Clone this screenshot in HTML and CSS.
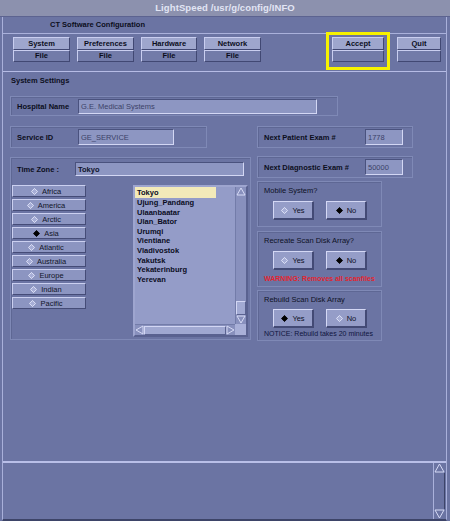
FILE: index.html
```html
<!DOCTYPE html>
<html>
<head>
<meta charset="utf-8">
<link rel="stylesheet" href="styles.css">
</head>
<body>
<div class="win">
  <div class="titlebar">LightSpeed /usr/g/config/INFO</div>
  <div class="app">
    <div class="apptitle">CT Software Configuration</div>
    <div class="toolbar">
      <div class="tbgroup">
        <div class="tbtn"><span class="tb-top">System</span><span class="tb-bot">File</span></div>
        <div class="tbtn"><span class="tb-top">Preferences</span><span class="tb-bot">File</span></div>
        <div class="tbtn tb-narrow"><span class="tb-top">Hardware</span><span class="tb-bot">File</span></div>
        <div class="tbtn"><span class="tb-top">Network</span><span class="tb-bot">File</span></div>
      </div>
      <div class="tbtn accept"><span class="tb-top">Accept</span><span class="tb-bot"></span><span class="highlight"></span></div>
      <div class="tbtn quit"><span class="tb-top">Quit</span><span class="tb-bot"></span></div>
    </div>
    <div class="settings">
      <div class="settings-label">System Settings</div>
      <div class="rows">
        <div class="box hospital">
          <span class="lbl lbl-hosp">Hospital Name</span>
          <span class="input in-hosp">G.E. Medical Systems</span>
        </div>
        <div class="row2">
          <div class="box service">
            <span class="lbl lbl-hosp">Service ID</span>
            <span class="input in-svc">GE_SERVICE</span>
          </div>
          <div class="box exam">
            <span class="lbl lbl-exam">Next Patient Exam #</span>
            <span class="input in-exam">1778</span>
          </div>
        </div>
        <div class="row3">
          <div class="box tz">
            <div class="tz-head">
              <span class="lbl lbl-tz">Time Zone :</span>
              <span class="input in-tz">Tokyo</span>
            </div>
            <div class="tz-body">
              <div class="regions">
                <div class="rbtn"><svg class="dia" viewBox="0 0 8 8"><polygon points="4,0.5 7.5,4 4,7.5 0.5,4"/></svg>Africa</div>
                <div class="rbtn"><svg class="dia" viewBox="0 0 8 8"><polygon points="4,0.5 7.5,4 4,7.5 0.5,4"/></svg>America</div>
                <div class="rbtn"><svg class="dia" viewBox="0 0 8 8"><polygon points="4,0.5 7.5,4 4,7.5 0.5,4"/></svg>Arctic</div>
                <div class="rbtn"><svg class="dia on" viewBox="0 0 8 8"><polygon points="4,0.5 7.5,4 4,7.5 0.5,4"/></svg>Asia</div>
                <div class="rbtn"><svg class="dia" viewBox="0 0 8 8"><polygon points="4,0.5 7.5,4 4,7.5 0.5,4"/></svg>Atlantic</div>
                <div class="rbtn"><svg class="dia" viewBox="0 0 8 8"><polygon points="4,0.5 7.5,4 4,7.5 0.5,4"/></svg>Australia</div>
                <div class="rbtn"><svg class="dia" viewBox="0 0 8 8"><polygon points="4,0.5 7.5,4 4,7.5 0.5,4"/></svg>Europe</div>
                <div class="rbtn"><svg class="dia" viewBox="0 0 8 8"><polygon points="4,0.5 7.5,4 4,7.5 0.5,4"/></svg>Indian</div>
                <div class="rbtn"><svg class="dia" viewBox="0 0 8 8"><polygon points="4,0.5 7.5,4 4,7.5 0.5,4"/></svg>Pacific</div>
              </div>
              <div class="listbox">
                <div class="list-main">
                  <div class="list">
                    <div class="item sel">Tokyo</div>
                    <div class="item">Ujung_Pandang</div>
                    <div class="item">Ulaanbaatar</div>
                    <div class="item">Ulan_Bator</div>
                    <div class="item">Urumqi</div>
                    <div class="item">Vientiane</div>
                    <div class="item">Vladivostok</div>
                    <div class="item">Yakutsk</div>
                    <div class="item">Yekaterinburg</div>
                    <div class="item">Yerevan</div>
                  </div>
                  <div class="vsb">
                    <svg class="arr" viewBox="0 0 10 9"><polygon points="5,1 9,8 1,8"/></svg>
                    <div class="vsb-track"></div>
                    <div class="vsb-thumb"></div>
                    <svg class="arr" viewBox="0 0 10 9"><polygon points="1,1 9,1 5,8"/></svg>
                  </div>
                </div>
                <div class="list-foot">
                  <div class="hsb">
                    <svg class="harr" viewBox="0 0 9 10"><polygon points="1,5 8,1 8,9"/></svg>
                    <div class="hsb-thumb"></div>
                    <svg class="harr" viewBox="0 0 9 10"><polygon points="1,1 8,5 1,9"/></svg>
                  </div>
                  <div class="corner"></div>
                </div>
              </div>
            </div>
          </div>
          <div class="rcol">
            <div class="box exam">
              <span class="lbl lbl-exam">Next Diagnostic Exam #</span>
              <span class="input in-exam">50000</span>
            </div>
            <div class="box q q-mobile">
              <div class="qlabel">Mobile System?</div>
              <div class="yn">
                <div class="ybtn"><svg class="dia" viewBox="0 0 8 8"><polygon points="4,0.5 7.5,4 4,7.5 0.5,4"/></svg>Yes</div>
                <div class="ybtn"><svg class="dia on" viewBox="0 0 8 8"><polygon points="4,0.5 7.5,4 4,7.5 0.5,4"/></svg>No</div>
              </div>
            </div>
            <div class="box q q-recreate">
              <div class="qlabel">Recreate Scan Disk Array?</div>
              <div class="yn">
                <div class="ybtn"><svg class="dia" viewBox="0 0 8 8"><polygon points="4,0.5 7.5,4 4,7.5 0.5,4"/></svg>Yes</div>
                <div class="ybtn"><svg class="dia on" viewBox="0 0 8 8"><polygon points="4,0.5 7.5,4 4,7.5 0.5,4"/></svg>No</div>
              </div>
              <div class="warn">WARNING: Removes all scanfiles</div>
            </div>
            <div class="box q q-rebuild">
              <div class="qlabel">Rebuild Scan Disk Array</div>
              <div class="yn">
                <div class="ybtn"><svg class="dia on" viewBox="0 0 8 8"><polygon points="4,0.5 7.5,4 4,7.5 0.5,4"/></svg>Yes</div>
                <div class="ybtn"><svg class="dia" viewBox="0 0 8 8"><polygon points="4,0.5 7.5,4 4,7.5 0.5,4"/></svg>No</div>
              </div>
              <div class="notice">NOTICE: Rebuild takes 20 minutes</div>
            </div>
          </div>
        </div>
      </div>
    </div>
    <div class="messages">
      <div class="msg-area"></div>
      <div class="msb">
        <svg class="marr" viewBox="0 0 11 10"><polygon points="5.5,1 10,9 1,9"/></svg>
        <div class="msb-track"></div>
        <svg class="marr" viewBox="0 0 11 10"><polygon points="1,1 10,1 5.5,9"/></svg>
      </div>
    </div>
  </div>
</div>
</body>
</html>
```

FILE: styles.css
```css
* { box-sizing: border-box; }
html, body { margin: 0; padding: 0; }
body {
  width: 450px;
  height: 521px;
  overflow: hidden;
  background: #6b74a3;
  font-family: "Liberation Sans", Arial, sans-serif;
  font-size: 7.5px;
  font-weight: bold;
  color: #0c0e1c;
}
.win { width: 450px; height: 521px; display: flex; flex-direction: column; background: #6b74a3; }

.titlebar {
  height: 17px;
  background: #8c91ae;
  border-bottom: 1px solid #5c6390;
  color: #e2e5f4;
  font-size: 9.5px;
  font-weight: bold;
  text-align: center;
  line-height: 16px;
  letter-spacing: 0.1px;
}

.app {
  flex: 1;
  display: flex;
  flex-direction: column;
  margin: 0 3px 0 2px;
  border-left: 1px solid #a9b0da;
  border-right: 1px solid #a9b0da;
  border-bottom: 2px solid #3d4468;
}

.apptitle {
  height: 16px;
  padding-left: 47px;
  line-height: 15px;
}

.toolbar {
  height: 39px;
  border-top: 1px solid #aab1db;
  border-bottom: 1px solid #b6bce5;
  display: flex;
  align-items: flex-start;
  padding: 3px 0 0 10px;
}
.tbgroup { display: flex; gap: 7px; }
.tbtn {
  width: 57px;
  height: 25px;
  display: flex;
  flex-direction: column;
  position: relative;
  flex: none;
}
.tb-top, .tb-bot {
  height: 12.5px;
  display: flex;
  align-items: center;
  justify-content: center;
  border-top: 1px solid #c9cef0;
  border-left: 1px solid #c9cef0;
  border-bottom: 1px solid #414873;
  border-right: 1px solid #414873;
}
.tb-top { background: #9ea6cd; font-weight: 600; }
.tb-bot { background: #727ba9; }
.tb-narrow { width: 56px; }
.accept { width: 52px; margin-left: 71px; }
.quit { width: 44px; margin-left: 13px; }
.highlight {
  position: absolute;
  left: -6px;
  top: -5px;
  width: 64px;
  height: 38px;
  border: 3px solid #f6f200;
}

.settings {
  flex: 1;
  padding: 4px 0 0 7px;
}
.settings-label { height: 10px; line-height: 10px; padding-left: 1px; }
.rows { margin-top: 10px; display: flex; flex-direction: column; }

.box {
  border: 1px solid #7f89b6;
  box-shadow: inset 1px 1px 0 #5e6794;
}
.hospital {
  width: 328px;
  height: 20px;
  display: flex;
  align-items: center;
  padding-left: 6px;
}
.lbl { display: inline-block; }
.lbl-hosp { width: 61px; }
.input {
  display: inline-flex;
  align-items: center;
  background: #8d96c2;
  border-top: 1px solid #4a527e;
  border-left: 1px solid #4a527e;
  border-bottom: 1px solid #d3d7f4;
  border-right: 1px solid #d3d7f4;
  padding-left: 2px;
  color: #3c4268;
  font-weight: normal;
  font-size: 7.5px;
}
.in-hosp { width: 239px; height: 15px; }
.row2 { display: flex; gap: 50px; margin-top: 10px; }
.service {
  width: 197px;
  height: 22px;
  display: flex;
  align-items: center;
  padding-left: 6px;
}
.in-svc { width: 96px; height: 16px; }
.exam {
  width: 156px;
  height: 22px;
  display: flex;
  align-items: center;
  padding-left: 6px;
}
.lbl-exam { width: 101px; }
.in-exam { width: 38px; height: 16px; }

.row3 { display: flex; gap: 6px; margin-top: 8px; }
.tz {
  width: 241px;
  height: 183px;
  margin-top: 1px;
  padding: 4px 1px 1px 1px;
  display: flex;
  flex-direction: column;
}
.tz-head { display: flex; align-items: center; height: 14px; padding-left: 5px; }
.lbl-tz { width: 58px; }
.in-tz { width: 169px; height: 14px; color: #10132a; font-weight: bold; }
.tz-body { display: flex; margin-top: 9px; }
.regions { display: flex; flex-direction: column; gap: 2px; width: 74px; }
.rbtn {
  height: 12px;
  background: #8c95c1;
  border-top: 1px solid #cbd0f0;
  border-left: 1px solid #cbd0f0;
  border-bottom: 1px solid #454c77;
  border-right: 1px solid #454c77;
  display: flex;
  align-items: center;
  justify-content: center;
  gap: 4px;
  font-weight: normal;
  color: #111428;
  padding-right: 6px;
}
.dia { width: 7px; height: 7px; flex: none; }
.dia polygon { fill: #a7aed6; stroke: #e6e9fb; stroke-width: 1; }
.dia.on polygon { fill: #000; stroke: #000; }

.listbox {
  margin-left: 47px;
  width: 115px;
  height: 152px;
  border: 2px solid #9ea5cf;
  border-right-color: #5a6290;
  border-bottom-color: #5a6290;
  background: #949cc8;
  display: flex;
  flex-direction: column;
}
.list-main { flex: 1; display: flex; }
.list { flex: 1; padding-top: 0; }
.item { height: 9.6px; line-height: 9.6px; padding-left: 2px; color: #0a0c1e; }
.item.sel { background: #f3eab9; width: 81px; height: 11px; line-height: 11px; }
.vsb {
  width: 11px;
  display: flex;
  flex-direction: column;
  background: #8890bd;
  border-left: 1px solid #737ca9;
}
.arr { width: 10px; height: 9px; flex: none; }
.arr polygon { fill: none; stroke: #d7dbf6; stroke-width: 1; }
.vsb-track { flex: 1; }
.vsb-thumb {
  height: 14px;
  background: #a2aad3;
  border: 1px solid #d3d7f4;
  border-right-color: #5a6290;
  border-bottom-color: #5a6290;
}
.list-foot { height: 11px; display: flex; }
.hsb {
  flex: 1;
  display: flex;
  align-items: center;
  background: #8890bd;
  border-top: 1px solid #737ca9;
}
.harr { width: 9px; height: 10px; flex: none; }
.harr polygon { fill: none; stroke: #d7dbf6; stroke-width: 1; }
.hsb-thumb {
  flex: 1;
  height: 9px;
  background: #a0a8d1;
  border: 1px solid #d3d7f4;
  border-right-color: #5a6290;
  border-bottom-color: #5a6290;
}
.corner { width: 11px; background: #a9b0d8; }

.rcol { display: flex; flex-direction: column; width: 156px; }
.q { width: 125px; padding: 4px 0 0 15px; }
.q-mobile { height: 46px; margin-top: 3px; }
.q-recreate { height: 56px; margin-top: 4px; }
.q-rebuild { height: 51px; margin-top: 3px; }
.qlabel { height: 10px; line-height: 10px; margin-left: -9px; font-weight: normal; color: #0e1126; }
.yn { display: flex; gap: 12px; margin-top: 5px; }
.q-rebuild .yn { margin-top: 4px; }
.ybtn {
  width: 41px;
  height: 19px;
  background: #959dc8;
  border-top: 1px solid #d4d8f5;
  border-left: 1px solid #d4d8f5;
  border-bottom: 2px solid #434a75;
  border-right: 2px solid #434a75;
  display: flex;
  align-items: center;
  justify-content: center;
  gap: 4px;
  font-weight: normal;
  color: #0d1026;
}
.warn {
  margin: 4px 0 0 -9px;
  height: 10px;
  line-height: 10px;
  color: #e3242f;
  font-size: 7px;
  font-weight: bold;
  white-space: nowrap;
}
.notice {
  margin: 1px 0 0 -9px;
  height: 10px;
  line-height: 10px;
  color: #101540;
  font-size: 7px;
  font-weight: normal;
  white-space: nowrap;
}

.messages {
  height: 58px;
  border-top: 2px solid #b9bfe8;
  display: flex;
}
.msg-area { flex: 1; }
.msb {
  width: 12px;
  margin-right: 1px;
  display: flex;
  flex-direction: column;
  border-left: 1px solid #aab1db;
  background: #6b74a3;
}
.marr { width: 11px; height: 10px; flex: none; }
.marr polygon { fill: none; stroke: #d7dbf6; stroke-width: 1; }
.msb-track { flex: 1; border-right: 1px solid #3d4468; }
```
